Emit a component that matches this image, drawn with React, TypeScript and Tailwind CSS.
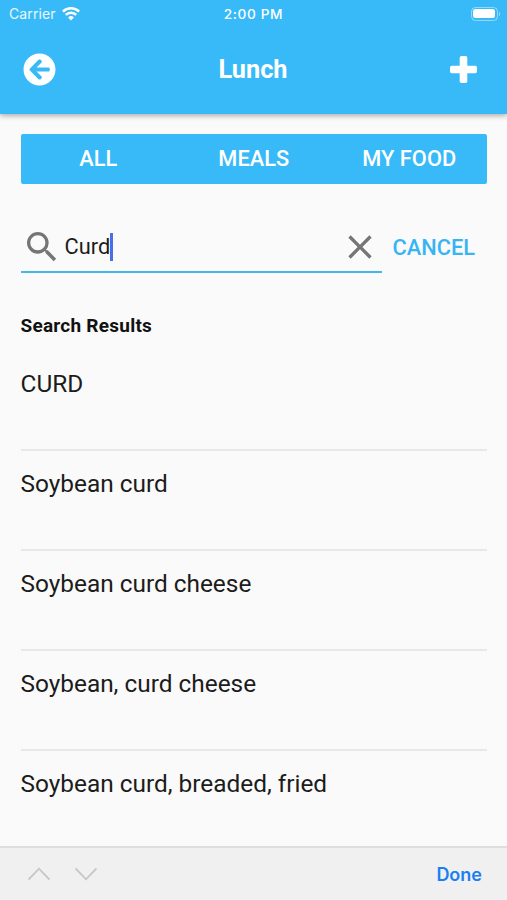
import React, { useState } from 'react';
import { FaArrowCircleLeft } from 'react-icons/fa';
import { MdClose, MdSearch } from 'react-icons/md';

const TABS = ['ALL', 'MEALS', 'MY FOOD'];

const FOODS = [
  'CURD',
  'Soybean curd',
  'Soybean curd cheese',
  'Soybean, curd cheese',
  'Soybean curd, breaded, fried',
];

function WifiIcon() {
  return (
    <svg width="18" height="14" viewBox="0 0 18 14" fill="none" stroke="white" strokeWidth="2.6">
      <path d="M0.9 4.6a11.6 11.6 0 0 1 16.2 0" />
      <path d="M3.8 7.9a7.4 7.4 0 0 1 10.4 0" />
      <path d="M9 13.5 6.1 10.4a4.1 4.1 0 0 1 5.8 0Z" fill="white" stroke="none" />
    </svg>
  );
}

function PlusIcon() {
  return (
    <svg width="27" height="27" viewBox="0 0 27 27" fill="white">
      <rect x="9.7" y="0" width="7.6" height="27" rx="1.8" />
      <rect x="0" y="9.7" width="27" height="7.6" rx="1.8" />
    </svg>
  );
}

function BatteryIcon() {
  return (
    <div className="flex items-center gap-px">
      <div className="h-[14px] w-[27px] rounded-[4.5px] border border-white/45 p-[1.5px]">
        <div className="h-full rounded-[2.5px] bg-white" />
      </div>
      <div className="h-[4px] w-[1.5px] rounded-r-full bg-white/45" />
    </div>
  );
}

function StatusBar() {
  return (
    <div className="grid h-[27px] grid-cols-3 items-center pr-[7px] pl-[9px] font-['Inter',sans-serif] text-white">
      <div className="flex items-center gap-[6px]">
        <span className="text-[14px] tracking-[0.1px] text-white/90">Carrier</span>
        <WifiIcon />
      </div>
      <span className="-ml-[2px] pt-px text-center text-[13.7px] font-medium tracking-[0.6px]">2:00 PM</span>
      <div className="flex justify-end">
        <BatteryIcon />
      </div>
    </div>
  );
}

function Header() {
  return (
    <header className="h-[114px] shrink-0 bg-[#37baf7] shadow-[0_2px_5px_rgba(0,0,0,0.3)]">
      <StatusBar />
      <div className="flex h-[84px] items-center justify-between pr-[30px] pl-[23px] text-white">
        <button>
          <FaArrowCircleLeft size={33} />
        </button>
        <h1 className="pt-px text-[25.3px] font-bold">Lunch</h1>
        <button>
          <PlusIcon />
        </button>
      </div>
    </header>
  );
}

function SearchBar() {
  const [query, setQuery] = useState('Curd');

  return (
    <div className="mt-[38px] flex h-[51px] items-center">
      <div className="flex h-full w-[361px] items-center border-b-2 border-[#42b8ea] pt-[2px] text-[#757575]">
        <MdSearch size={40} className="ml-px shrink-0" />
        <div className="ml-[3px] flex flex-1 items-center text-[21.8px] text-[#1c1c1c]">
          <span className="pt-px">{query}</span>
          <span className="h-[28px] w-[2.5px] bg-[#4a6ee8]" />
        </div>
        <button onClick={() => setQuery('')}>
          <MdClose size={40} className="mr-[2px]" />
        </button>
      </div>
      <button className="ml-[11px] pt-[2px] text-[21.8px] font-medium text-[#37b5f2]">CANCEL</button>
    </div>
  );
}

function KeyboardBar() {
  return (
    <footer className="flex h-[54px] shrink-0 items-center justify-between border-t-2 border-[#dedede] bg-[#f0f0f0] pr-[25px] pl-[28px]">
      <div className="flex gap-[25px]">
        <svg width="22" height="14" viewBox="0 0 22 14" fill="none" stroke="#c6c6c6" strokeWidth="1.8">
          <path d="M0.5 12.5 11 1.7 21.5 12.5" />
        </svg>
        <svg width="22" height="14" viewBox="0 0 22 14" fill="none" stroke="#c6c6c6" strokeWidth="1.8">
          <path d="M0.5 1.5 11 12.3 21.5 1.5" />
        </svg>
      </div>
      <button className="font-['Inter',sans-serif] text-[18px] font-semibold text-[#1a7ff0]">Done</button>
    </footer>
  );
}

export default function App() {
  return (
    <div className="flex h-[900px] w-[507px] flex-col overflow-hidden bg-[#fafafa] font-['Roboto',sans-serif] text-[#1c1c1c]">
      <Header />
      <main className="flex-1 overflow-hidden pt-[20px] pr-[20px] pl-[20.5px]">
        <div className="grid h-[49.5px] grid-cols-3 rounded-[2px] bg-[#37baf7] text-[21.8px] font-medium text-white">
          {TABS.map((tab) => (
            <button key={tab} className="pt-px">
              {tab}
            </button>
          ))}
        </div>
        <SearchBar />
        <h2 className="mt-[39px] h-[28px] text-[19px] leading-[28px] font-bold tracking-[0.24px] text-[#111]">
          Search Results
        </h2>
        <ul className="mt-[11px]">
          {FOODS.map((food) => (
            <li
              key={food}
              className="h-[100.2px] border-b-2 border-[#e8e8e8] pt-[16px] text-[24.4px] leading-[34px]"
            >
              {food}
            </li>
          ))}
        </ul>
      </main>
      <KeyboardBar />
    </div>
  );
}
